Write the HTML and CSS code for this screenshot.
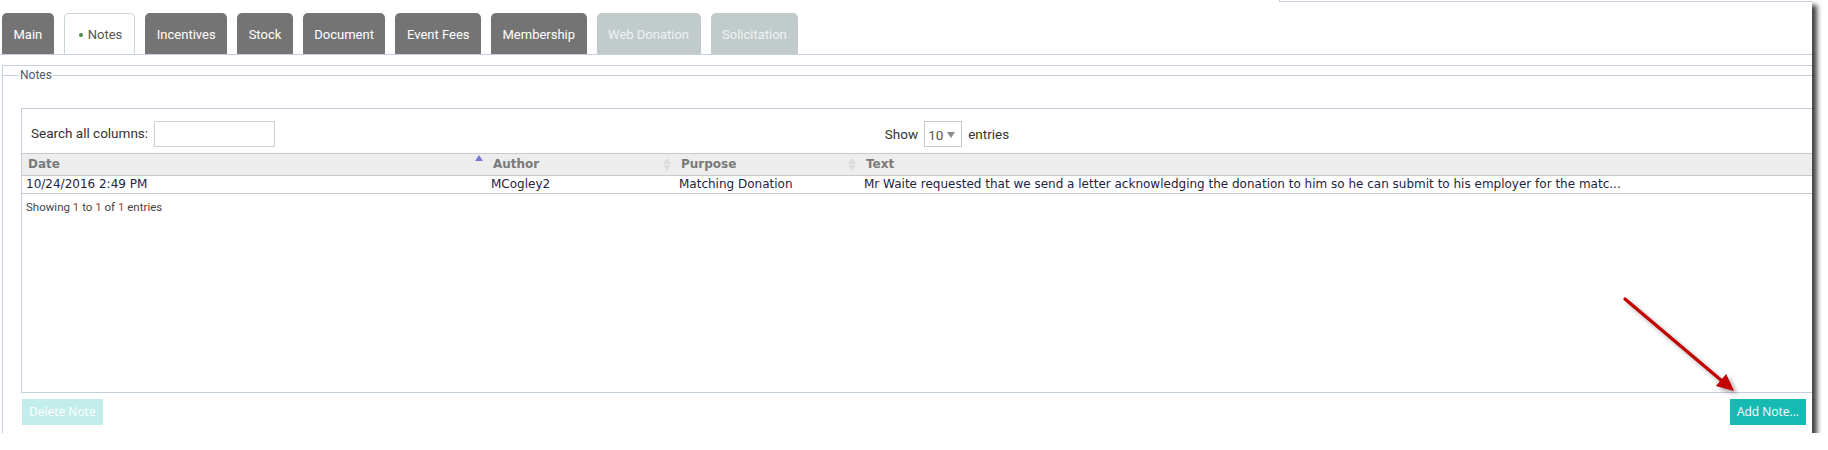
FILE: index.html
```html
<!DOCTYPE html>
<html lang="en">
<head>
    <meta charset="UTF-8">
    <title>Constituent Notes</title>
    <link rel="stylesheet" href="styles.css">
</head>
<body>
    <div class="page">
        <div class="topbar"><div class="topbox"></div></div>

        <ul class="tabs">
            <li class="tab">Main</li>
            <li class="tab active"><span class="dot"></span>Notes</li>
            <li class="tab">Incentives</li>
            <li class="tab">Stock</li>
            <li class="tab">Document</li>
            <li class="tab">Event Fees</li>
            <li class="tab">Membership</li>
            <li class="tab disabled">Web Donation</li>
            <li class="tab disabled">Solicitation</li>
        </ul>

        <div class="panel">
            <fieldset class="notes">
                <legend>Notes</legend>

                <div class="dt-wrap">
                    <div class="dt-toolbar">
                        <label class="dt-search">Search all columns: <input type="text"></label>
                        <div class="dt-length">Show <span class="select">10<i class="caret"></i></span> entries</div>
                        <div></div>
                    </div>

                    <table class="dt">
                        <colgroup>
                            <col class="c-date">
                            <col class="c-author">
                            <col class="c-purpose">
                            <col>
                        </colgroup>
                        <thead>
                            <tr>
                                <th><div class="th-in">Date <span class="sort sort-asc"></span></div></th>
                                <th><div class="th-in">Author <span class="sort"></span></div></th>
                                <th><div class="th-in">Purpose <span class="sort"></span></div></th>
                                <th><div class="th-in">Text</div></th>
                            </tr>
                        </thead>
                        <tbody>
                            <tr>
                                <td>10/24/2016 2:49 PM</td>
                                <td>MCogley2</td>
                                <td>Matching Donation</td>
                                <td>Mr Waite requested that we send a letter acknowledging the donation to him so he can submit to his employer for the matc...</td>
                            </tr>
                        </tbody>
                    </table>

                    <div class="dt-info">Showing <em>1</em> to <em>1</em> of <em>1</em> entries</div>
                </div>

                <div class="actions">
                    <button class="btn btn-off">Delete Note</button>
                    <button class="btn">Add Note...</button>
                </div>
            </fieldset>
        </div>

        <!-- red callout arrow pointing at the add button -->
        <svg class="pointer" width="130" height="110" viewBox="0 0 130 110">
            <line x1="15" y1="9" x2="112" y2="91" stroke="#c40000" stroke-width="3.2" stroke-linecap="round"/>
            <polygon points="124,101 105.8,96.1 116.2,83.9" fill="#c40000"/>
        </svg>
    </div>
</body>
</html>
```

FILE: styles.css
```css
* {
    box-sizing: border-box;
}

body {
    margin: 0;
    background: #fff;
    font-family: Roboto, "Liberation Sans", sans-serif;
    color: #333;
}

.page {
    position: relative;
    width: 1812px;
    height: 433px;
    background: #fff;
    overflow: hidden;
    box-shadow: 5px 5px 5px rgba(0, 0, 0, 0.75);
}

/* top strip */
.topbar {
    height: 2px;
    display: flex;
    justify-content: flex-end;
}

.topbox {
    width: 533px;
    height: 2px;
    border-left: 1px solid #c5cfdc;
    border-bottom: 1px solid #c5cfdc;
}

/* tabs */
.tabs {
    list-style: none;
    margin: 11px 0 0 0;
    padding: 0 0 0 2px;
    display: flex;
    gap: 10px;
    border-bottom: 1px solid #c6d1dd;
}

.tab {
    height: 41px;
    padding: 13px 11.5px 0;
    font-size: 13px;
    line-height: 18px;
    color: #fff;
    background: #747474;
    border-radius: 5px 5px 0 0;
}

.tab.active {
    background: #fff;
    color: #555;
    border: 1px solid #c9d4da;
    border-bottom: none;
    padding: 12px 12px 0 14px;
}

.tab.disabled {
    background: #c2cbcb;
    color: #eef2f2;
}

.dot {
    display: inline-block;
    width: 4px;
    height: 4px;
    border-radius: 50%;
    background: #4a8a4a;
    margin-right: 5px;
    vertical-align: middle;
    position: relative;
    top: -1px;
}

/* notes panel */
.panel {
    margin: 10px 0 0 2px;
    height: 368px;
    border-top: 1px solid #c5cfdc;
    border-left: 1px solid #c5cfdc;
}

.notes {
    margin: 2px 0 0 0;
    padding: 26px 0 0 18px;
    border: none;
    border-top: 1px solid #c5cfdc;
    min-width: 0;
}

.notes legend {
    font-size: 12px;
    line-height: 14px;
    color: #4f5a66;
    padding: 0 1px;
    margin-left: -2px;
}

/* data table wrapper */
.dt-wrap {
    width: 1852px;
    height: 285px;
    border: 1px solid #c5cfdc;
}

.dt-toolbar {
    display: grid;
    grid-template-columns: 1fr auto 1fr;
    align-items: center;
    padding: 12px 9px 6px;
    font-size: 13.5px;
    color: #333;
}

.dt-search input {
    width: 121px;
    height: 26px;
    margin-left: 3px;
    border: 1px solid #cfcfcf;
    vertical-align: middle;
}

.dt-length {
    display: flex;
    align-items: center;
    gap: 6px;
}

.select {
    position: relative;
    width: 38px;
    height: 26px;
    border: 1px solid #c8c8c8;
    padding: 5px 0 0 3px;
    color: #555;
}

.caret {
    position: absolute;
    right: 6px;
    top: 10px;
    border-left: 4px solid transparent;
    border-right: 4px solid transparent;
    border-top: 6px solid #8a8a8a;
}

table.dt {
    width: 100%;
    table-layout: fixed;
    border-collapse: separate;
    border-spacing: 0;
    font-family: "DejaVu Sans", Verdana, sans-serif;
    font-size: 12px;
}

.c-date { width: 465px; }
.c-author { width: 188px; }
.c-purpose { width: 185px; }

.dt th {
    background: #ededed;
    border-top: 1px solid #c9c9c9;
    border-bottom: 1px solid #c9c9c9;
    padding: 3px 4px 3px 6px;
    line-height: 15px;
    text-align: left;
    color: #7a7a7a;
    font-weight: bold;
}

.th-in {
    display: flex;
    justify-content: space-between;
    align-items: center;
}

.sort {
    width: 8px;
    height: 15px;
    position: relative;
}

.sort::before,
.sort::after {
    content: "";
    position: absolute;
    left: 0;
    border-left: 4px solid transparent;
    border-right: 4px solid transparent;
}

.sort::before {
    top: 1px;
    border-bottom: 6px solid #dcdcdc;
}

.sort::after {
    top: 8px;
    border-top: 6px solid #dcdcdc;
}

.sort-asc::before {
    top: -2px;
    border-bottom-color: #7777d6;
}

.sort-asc::after {
    display: none;
}

.dt td {
    padding: 1px 4px;
    line-height: 15px;
    border-bottom: 1px solid #cbcbcb;
    color: #1e2440;
    white-space: nowrap;
    overflow: hidden;
}

.dt-info {
    padding: 6px 4px;
    font-size: 11.5px;
    line-height: 14px;
    color: #444;
}

.dt-info em {
    font-style: normal;
    color: #a0413a;
}

/* bottom buttons */
.actions {
    display: flex;
    justify-content: space-between;
    margin: 6px 0 0 1px;
    padding-right: 6px;
}

.btn {
    font-family: "Open Sans", "Liberation Sans", sans-serif;
    font-size: 12px;
    line-height: 16px;
    padding: 5px 7px;
    color: #fff;
    background: #17bab3;
    border: none;
    border-radius: 0;
}

.btn-off {
    background: #c2edea;
}

.pointer {
    position: absolute;
    left: 1610px;
    top: 290px;
    filter: drop-shadow(3px 3px 2px rgba(0, 0, 0, 0.35));
}
```
